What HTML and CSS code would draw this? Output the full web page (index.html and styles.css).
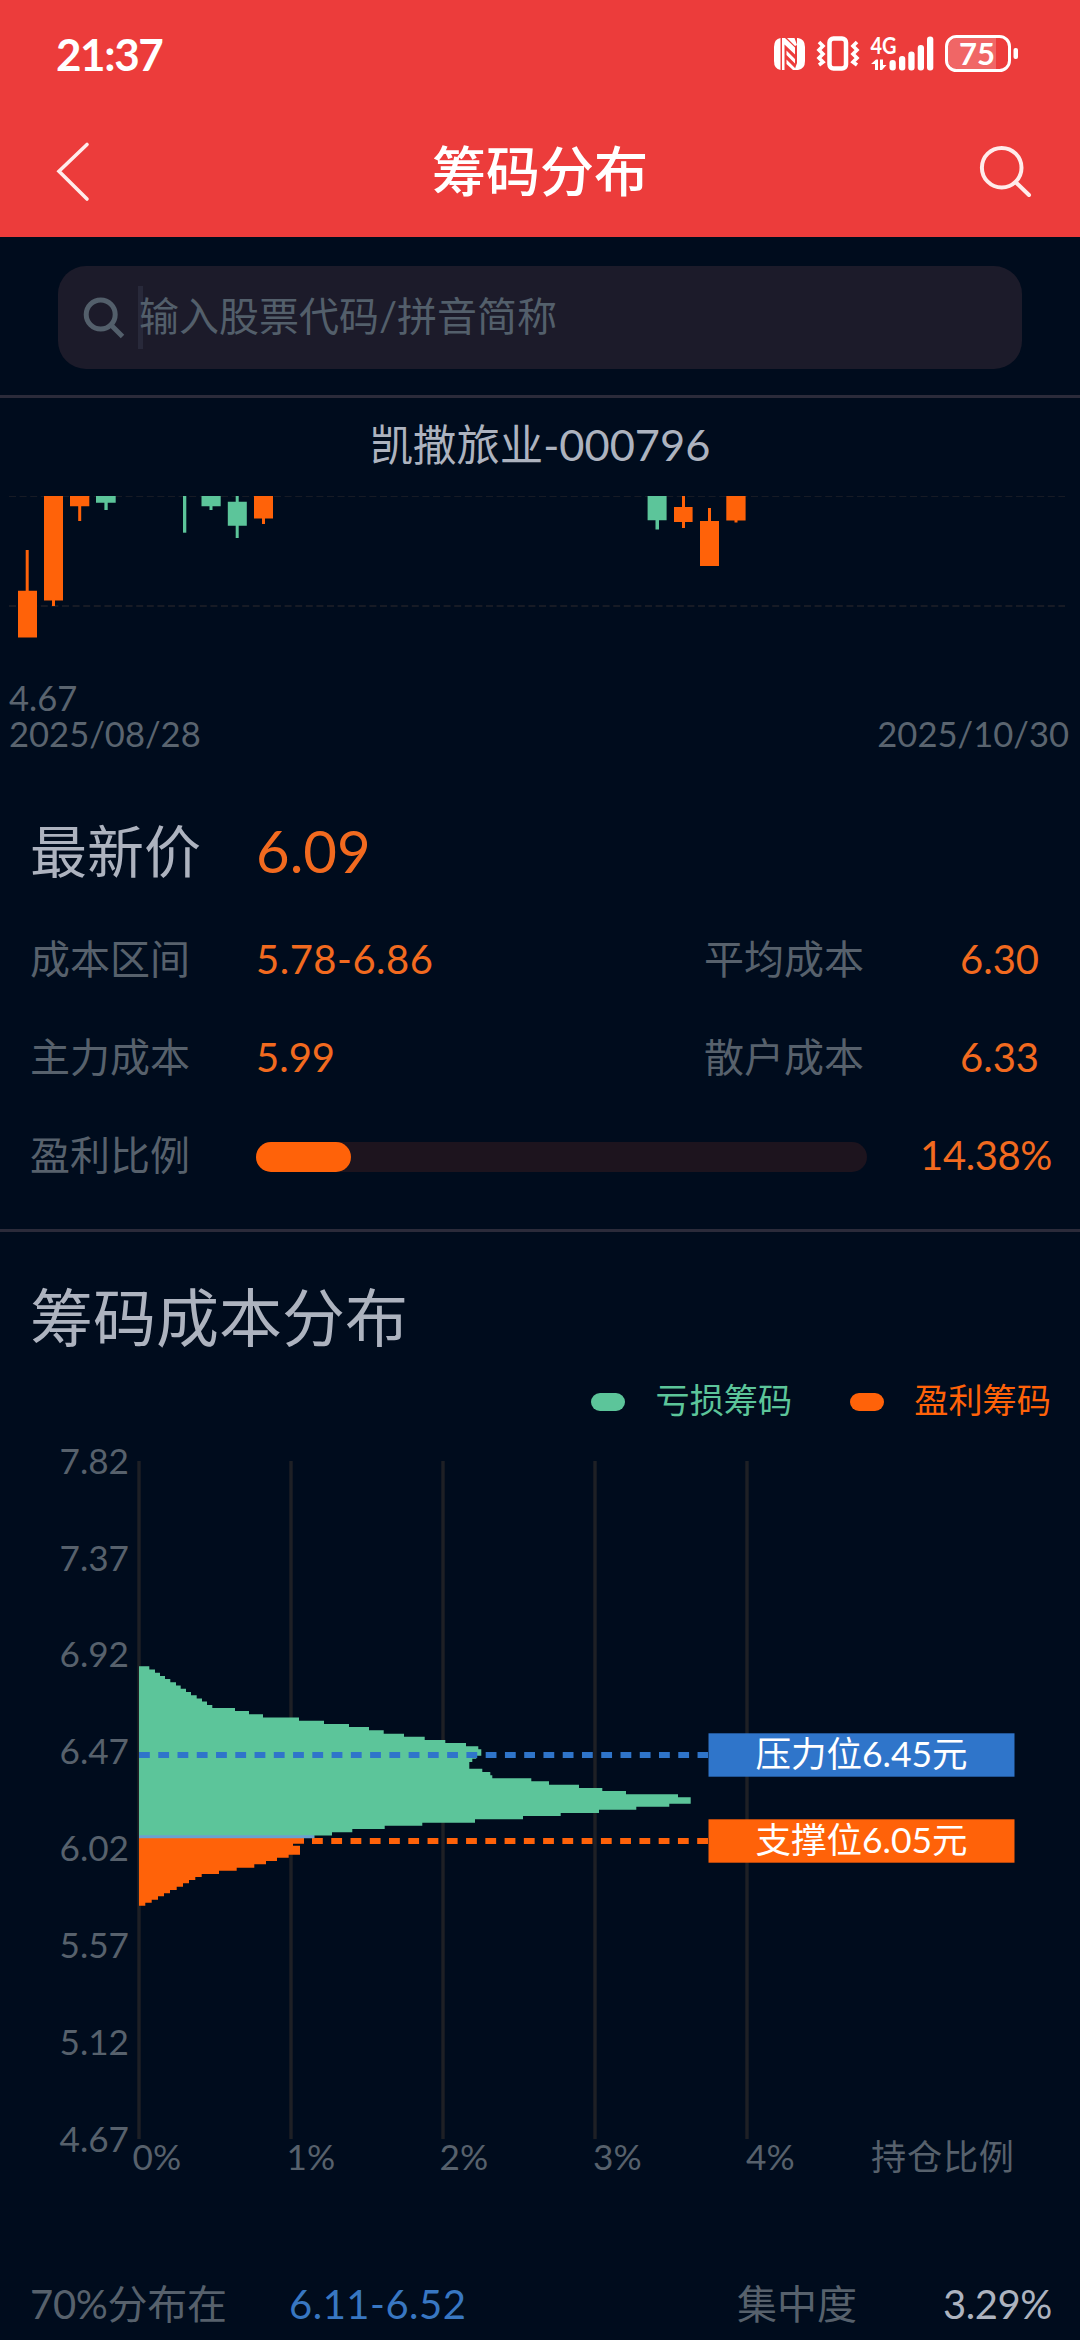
FILE: index.html
```html
<!DOCTYPE html>
<html lang="zh-CN">
<head>
<meta charset="utf-8">
<title>筹码分布</title>
<link rel="stylesheet" href="styles.css">
</head>
<body>
<div class="page">
  <header class="header">
    <div class="status">
      <span class="time">21:37</span>
      <svg class="status-icons" width="250" height="48" viewBox="770 30 250 48" fill="#fff">
        <path d="M780.500 38 Q774 39 774 47 V61 Q774 69 780.500 70 Z"/>
        <path d="M782 38 H785 L795 47.500 V54.500 L784.500 44.500 V70 H782 Z"/>
        <path d="M786.500 50.500 L795 59 V63.500 L786.500 55 Z M786.500 59.500 L795 68 V70 H793 L786.500 64 Z"/>
        <path d="M787 38 H794.500 L797 45 V63 L794.500 70 H798 Q805 69 805 61 V47 Q805 39 798 38 H797 V45 L795 46 Z"/>
        <rect x="829.500" y="38.500" width="16.500" height="30" rx="4" fill="none" stroke="#fff" stroke-width="4.500"/>
        <path d="M819 42 L823 46 L819 50 L823 54 L819 58 L823 62 L819 65 M857 42 L853 46 L857 50 L853 54 L857 58 L853 62 L857 65" fill="none" stroke="#fff" stroke-width="3.600"/>
        <text class="net" x="870.500" y="53.500" textLength="26" lengthAdjust="spacingAndGlyphs">4G</text>
        <path d="M871 64 L876 59.500 H878 V70 H875 V64 Z M880 59.500 H883 V65 L886.500 65 L882 70 H880 Z"/>
        <rect x="889.500" y="60" width="6.300" height="10.500" rx="3"/>
        <rect x="899" y="56" width="6.300" height="14.500" rx="3"/>
        <rect x="908.300" y="51.500" width="6.300" height="19" rx="3"/>
        <rect x="917.700" y="45" width="6.300" height="25.500" rx="3"/>
        <rect x="927" y="36.500" width="6.300" height="34" rx="3"/>
        <path d="M957 38 H996 V69 H957 A9 9 0 0 1 948 60 V47 A9 9 0 0 1 957 38 Z" opacity=".22"/>
        <rect x="946.500" y="36.500" width="63" height="34" rx="10" fill="none" stroke="#fff" stroke-width="3"/>
        <rect x="1013.500" y="48" width="4.500" height="11" rx="2"/>
        <text class="batt" x="959" y="64.700" textLength="36" lengthAdjust="spacingAndGlyphs">75</text>
      </svg>
    </div>
    <div class="nav">
      <svg width="40" height="64" viewBox="54 139 40 64" fill="none" stroke="#ffeceb" stroke-width="3.600" stroke-linecap="round"><path d="M87 144.500 L59 171.300 L87 199"/></svg>
      <h1 class="nav-title">筹码分布</h1>
      <svg width="56" height="56" viewBox="977 144 56 56" fill="none" stroke="#ffeceb" stroke-width="4" stroke-linecap="round"><circle cx="1001.700" cy="168.700" r="19.800"/><path d="M1016 183.500 L1029 196"/></svg>
    </div>
  </header>

  <section class="search">
    <div class="search-box">
      <svg class="search-icon" width="46" height="46" viewBox="81 295 46 46" fill="none" stroke="#535f6b" stroke-width="5"><circle cx="100.700" cy="314.500" r="14.500"/><path d="M111 325 L122.500 336.500"/></svg>
      <span class="caret"></span>
      <span class="placeholder">输入股票代码/拼音简称</span>
    </div>
  </section>

  <section class="kline">
    <h2 class="stock">凯撒旅业-000796</h2>
    <svg class="candles" width="1080" height="186" viewBox="0 492 1080 186">
      <g stroke="#171b25" stroke-dasharray="7 3.600"><path d="M9 496.500 H1065"/><path d="M9 606 H1065" stroke-width="2"/></g>
      <g fill="#ff6209">
        <path d="M18 590.700h19v46.800h-19z M25.700 550h3v42h-3z"/>
        <path d="M44 496h19v104.500h-19z M52 600h3v6h-3z"/>
        <path d="M70 496h19.300v10.200h-19.300z M78.200 506h3v15h-3z"/>
        <path d="M254 496h19v22.500h-19z M262 518h3v6h-3z"/>
        <path d="M674 507h18.600v15h-18.600z M682 496h3v32h-3z"/>
        <path d="M700 521h19v45h-19z M708 508h3v14h-3z"/>
        <path d="M726.300 496h19.300v24.500h-19.300z M734.500 520h3v2.500h-3z"/>
      </g>
      <g fill="#5cc59a">
        <path d="M96 496h19.700v6.800h-19.700z M104.400 502h3.300v8h-3.300z"/>
        <path d="M183 496h3.300v36.700h-3.300z"/>
        <path d="M201.500 496h19.200v10.200h-19.200z M209.500 506h3v4h-3z"/>
        <path d="M227.800 501.700h19v24h-19z M235.700 496h3v42h-3z"/>
        <path d="M647.600 496h19v24.300h-19z M655.500 520h3.500v9.500h-3.500z"/>
      </g>
    </svg>
    <div class="kline-low">4.67</div>
    <div class="kline-dates"><span>2025/08/28</span><span>2025/10/30</span></div>
  </section>

  <section class="info">
    <div class="row row-main"><span class="price-label">最新价</span><span class="price">6.09</span></div>
    <div class="row"><span class="label">成本区间</span><span class="value range">5.78-6.86</span><span class="label">平均成本</span><span class="value">6.30</span></div>
    <div class="row"><span class="label">主力成本</span><span class="value">5.99</span><span class="label">散户成本</span><span class="value">6.33</span></div>
    <div class="row row-ratio"><span class="label">盈利比例</span><span class="track"><span class="fill" style="width:15.600%"></span></span><span class="value percent">14.38%</span></div>
  </section>

  <section class="dist">
    <h2 class="dist-title">筹码成本分布</h2>
    <div class="legend">
      <span class="legend-item loss"><i class="pill"></i>亏损筹码</span>
      <span class="legend-item gain"><i class="pill"></i>盈利筹码</span>
    </div>
    <svg class="chart" width="1080" height="760" viewBox="0 1430 1080 760">
      <path d="M139 1461V2139 M291 1461V2139 M443 1461V2139 M595 1461V2139 M747 1461V2139" stroke="#1e2025" stroke-width="3.400"/>
      <g class="axis" text-anchor="end">
        <text x="129" y="1474">7.82</text><text x="129" y="1570.500">7.37</text><text x="129" y="1667">6.92</text><text x="129" y="1764">6.47</text><text x="129" y="1861">6.02</text><text x="129" y="1958">5.57</text><text x="129" y="2055">5.12</text><text x="129" y="2151.500">4.67</text>
      </g>
      <g class="axis">
        <text x="132.500" y="2170">0%</text><text x="286.500" y="2170">1%</text><text x="439.500" y="2170">2%</text><text x="593" y="2170">3%</text><text x="746" y="2170">4%</text><text x="871" y="2170" textLength="143">持仓比例</text>
      </g>
      <path fill="#5cc59a" d="M139 1666.300H149.300V1669.500H155V1672.700H160V1676H165V1679H170.300V1682.300H176V1685.500H180.700V1688.700H186V1692H191V1695.200H196.700V1698.400H202V1701.600H207V1705H212.300V1708H235V1711H249V1714.300H263V1717.600H299V1720.700H324V1724H349V1727H369V1730.300H383.700V1733.700H404V1736.700H424.700V1740H445.300V1743H466V1746.300H478.300V1749.300H481.300V1755.700H476.300V1758.700H472.300V1762H469.300V1768.700H482.300V1772H490.300V1775.300H492.300V1778.300H531.300V1781.300H549V1784.700H579V1788H602.300V1791H626V1794.300H678V1797.300H690.700V1803.700H669.300V1806.700H636.300V1809.700H599V1813H560.700V1816H523V1819.300H475V1822.700H422.300V1825.700H384.700V1829H352.300V1832.300H332V1835.600H314.300V1838H139Z"/>
      <path fill="#ff6209" d="M139 1838H304V1843.700H293V1845.700H300V1854.700H288.700V1857.700H277V1861H266V1864.300H254.300V1867.700H236.700V1870.700H219V1874H201.700V1877H195.300V1880H189V1883.300H183V1886.700H176.700V1890H170V1893.300H164V1896.300H158V1899.700H151.700V1902.700H145.300V1905.700H139Z"/>
      <path d="M139 1755H708" stroke="#2f75ca" stroke-width="6" stroke-dasharray="10.800 8.460"/>
      <path d="M312 1841H708" stroke="#ff6209" stroke-width="6" stroke-dasharray="10.800 8.460"/>
      <path d="M139 1836.800H314.300" stroke="#6ba1cf" stroke-width="3"/>
      <rect x="708.500" y="1733.300" width="306" height="43.400" fill="#2f75ca"/>
      <rect x="708.500" y="1819.300" width="306" height="43.400" fill="#ff6209"/>
      <g class="tag" text-anchor="middle"><text x="861.500" y="1767">压力位6.45元</text><text x="861.500" y="1853">支撑位6.05元</text></g>
    </svg>
    <div class="row row-foot"><span class="label foot-label">70%分布在</span><span class="value range blue">6.11-6.52</span><span class="label">集中度</span><span class="value light percent">3.29%</span></div>
  </section>
</div>
</body>
</html>
```
FILE: styles.css
```css
* { box-sizing: border-box; }
body { margin: 0; background: #000c1d; }
.page {
  width: 1080px;
  height: 2340px;
  overflow: hidden;
  background: #000c1d;
  color: #adb3bf;
  font-family: Lato, "Noto Sans CJK SC", sans-serif;
}
h1, h2 { margin: 0; font-weight: 400; }
svg { display: block; }

.header { height: 237px; background: #ec3c3b; color: #fff; }
.status { display: flex; justify-content: space-between; height: 107px; padding: 30px 60px 0 56px; }
.time { font-size: 44px; line-height: 48px; font-weight: 700; letter-spacing: -1.400px; }
.net { font-size: 22px; font-weight: 700; }
.batt { font-size: 31px; font-weight: 700; }
.nav { display: flex; align-items: center; justify-content: space-between; height: 128px; padding: 0 47px 0 54px; }
.nav-title { font-size: 54px; line-height: 64px; font-weight: 500; padding: 2px 0 0 9px; }

.search { height: 161px; padding: 29px 58px 0; border-bottom: 3px solid #2b2b3a; }
.search-box { display: flex; align-items: center; height: 103px; padding-left: 23px; border-radius: 28px; background: #1c1b2a; }
.caret { width: 5px; height: 63px; margin: 0 -4px 0 11px; background: #28293a; }
.placeholder { padding-bottom: 4px; font-size: 40px; line-height: 60px; color: #535f6b; }

.kline { height: 400px; font-size: 34.600px; }
.stock { height: 94px; padding-top: 16px; font-size: 43.400px; line-height: 60px; text-align: center; }
.kline-low, .kline-dates { padding: 0 11px 0 9px; line-height: 36px; color: #5a646f; }
.kline-low { padding-top: 2px; }
.kline-dates { display: flex; justify-content: space-between; }

.info { height: 434px; padding-bottom: 28px; border-bottom: 3px solid #2b2b3a; }
.row { display: grid; grid-template-columns: 226px 448px 256px 1fr; align-items: center; height: 98px; padding: 0 28px 0 30px; font-size: 40px; line-height: 60px; }
.row-main { height: 112px; padding-bottom: 7px; font-size: 57px; }
.price, .value { color: #f26a1f; }
.price { font-size: 58px; }
.range { letter-spacing: .5px; }
.label { color: #57616c; }
.row-ratio { grid-template-columns: 226px 611px 1fr; }
.track { height: 30px; margin-top: 4px; border-radius: 15px; background: #1d141e; }
.fill { display: block; height: 100%; border-radius: 15px; background: #ff6209; }
.percent { text-align: right; letter-spacing: -.4px; }

.dist-title { height: 130px; padding: 45px 30px 0; font-size: 63px; line-height: 80px; }
.legend { display: flex; justify-content: flex-end; gap: 58px; height: 68px; padding: 14px 29px 0; font-size: 34.200px; line-height: 48px; }
.legend-item { display: flex; align-items: center; gap: 30px; height: 48px; }
.pill { width: 34px; height: 18px; margin-top: 4px; border-radius: 9px; background: currentColor; }
.loss { color: #5cc59a; }
.gain { color: #ff6209; }
.axis { font-size: 35.200px; fill: #57616c; }
.tag { font-size: 35.500px; fill: #fff; }
.row-foot { grid-template-columns: 259px 448px 1fr auto; height: 98px; margin-top: 65px; }
.foot-label { letter-spacing: -.3px; }
.blue { color: #3877c2; }
.light { color: #adb3bf; }
```
